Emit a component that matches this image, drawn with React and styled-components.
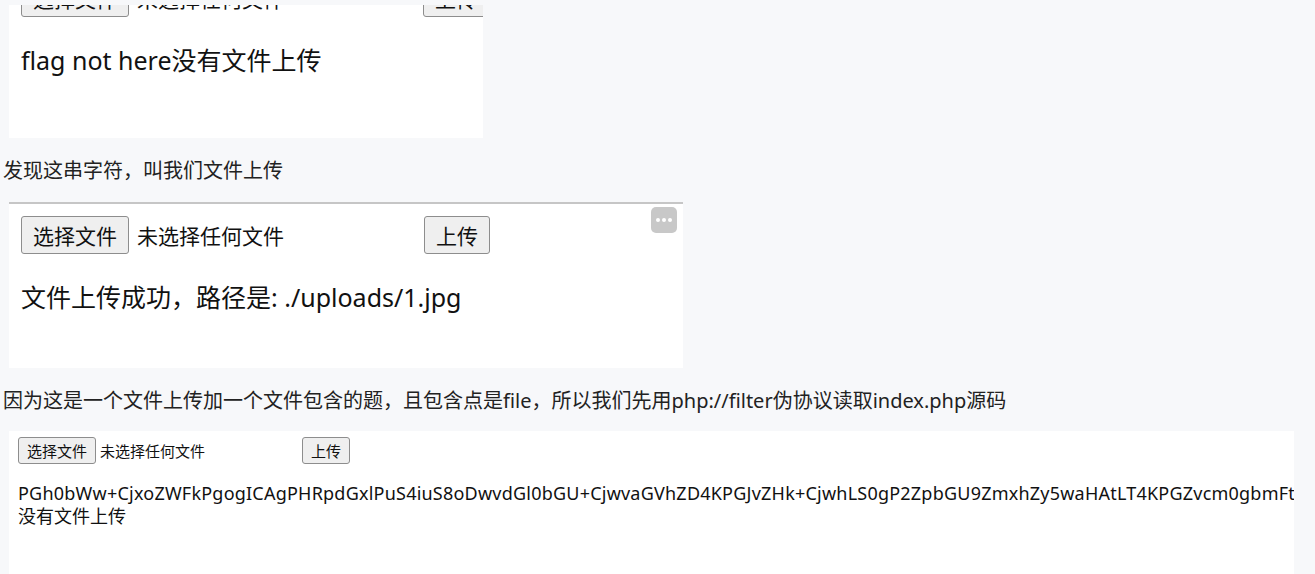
import styled, { createGlobalStyle } from 'styled-components';

const GlobalStyle = createGlobalStyle`
  html, body {
    margin: 0;
    padding: 0;
    background: #f7f8fa;
  }
  body {
    font-family: "Noto Sans", "Noto Sans CJK SC", sans-serif;
    overflow: hidden;
  }
`;

const Page = styled.div`
  display: flex;
  flex-direction: column;
  align-items: flex-start;
  padding-top: 5px;
  width: 1315px;
  height: 574px;
  box-sizing: border-box;
  overflow: hidden;
`;

const Shot = styled.div`
  position: relative;
  flex: none;
  margin-left: 9px;
  width: ${(p) => p.$w}px;
  height: ${(p) => p.$h}px;
  background: #fff;
  overflow: hidden;
  box-sizing: border-box;
  border-top: ${(p) => (p.$rule ? '2px solid #c6c6c6' : 'none')};
  padding: ${(p) => p.$pad};
  display: flex;
  flex-direction: column;
  color: #000;
`;

const Para = styled.p`
  flex: none;
  margin: 0;
  padding-left: 3px;
  font-size: 20px;
  line-height: 26px;
  color: #222;
  white-space: nowrap;
  font-family: "Noto Sans", "Noto Sans CJK SC", sans-serif;
  margin-top: ${(p) => p.$top}px;
  margin-bottom: ${(p) => p.$bottom}px;
`;

const FormRow = styled.div`
  display: flex;
  align-items: center;
  flex: none;
  margin-top: ${(p) => p.$top || 0}px;
  font-size: ${(p) => p.$fs}px;
`;

const FileBox = styled.div`
  display: flex;
  align-items: center;
  width: ${(p) => p.$w}px;
  flex: none;
`;

const Btn = styled.button`
  font-family: "Noto Sans CJK SC", sans-serif;
  font-size: ${(p) => p.$fs}px;
  height: ${(p) => p.$h}px;
  padding: 0 ${(p) => p.$px}px;
  background: #efefef;
  color: #111;
  border: 1px solid #8d8d8d;
  border-radius: 3px;
  line-height: 1;
  flex: none;
`;

const NoFile = styled.span`
  margin-left: ${(p) => p.$gap}px;
  font-family: "Noto Sans CJK SC", sans-serif;
  color: #111;
  white-space: nowrap;
`;

const Result = styled.div`
  flex: none;
  font-size: ${(p) => p.$fs}px;
  line-height: ${(p) => p.$lh}px;
  margin-top: ${(p) => p.$top}px;
  white-space: nowrap;
  color: #111;
`;

const Encoded = styled.span`
  letter-spacing: 0.22px;
`;

const MoreBtn = styled.div`
  position: absolute;
  top: 3px;
  right: 6px;
  width: 26px;
  height: 26px;
  border-radius: 5px;
  background: #c8c8c8;
  display: flex;
  align-items: center;
  justify-content: center;
  gap: 2px;
`;

const Dot = styled.span`
  width: 4px;
  height: 4px;
  border-radius: 50%;
  background: #fff;
`;

const BASE64 =
  'PGh0bWw+CjxoZWFkPgogICAgPHRpdGxlPuS4iuS8oDwvdGl0bGU+CjwvaGVhZD4KPGJvZHk+CjwhLS0gP2ZpbGU9ZmxhZy5waHAtLT4KPGZvcm0gbmFt';

function UploadForm({ fs, h, px, fileW, gap }) {
  return (
    <>
      <FileBox $w={fileW}>
        <Btn $fs={fs} $h={h} $px={px}>选择文件</Btn>
        <NoFile $gap={gap}>未选择任何文件</NoFile>
      </FileBox>
      <Btn $fs={fs} $h={h} $px={px}>上传</Btn>
    </>
  );
}

export default function App() {
  return (
    <Page>
      <GlobalStyle />
      <Shot $w={474} $h={133} $pad="0 0 0 12px">
        <FormRow $fs={21} $top={-26}>
          <UploadForm fs={21} h={38} px={11} fileW={402} gap={8} />
        </FormRow>
        <Result $fs={25} $lh={32} $top={27}>flag not here没有文件上传</Result>
      </Shot>

      <Para $top={20} $bottom={18}>发现这串字符，叫我们文件上传</Para>

      <Shot $w={674} $h={166} $pad="12px 0 0 12px" $rule>
        <FormRow $fs={21}>
          <UploadForm fs={21} h={38} px={11} fileW={403} gap={8} />
        </FormRow>
        <Result $fs={25} $lh={32} $top={27}>文件上传成功，路径是: ./uploads/1.jpg</Result>
        <MoreBtn>
          <Dot />
          <Dot />
          <Dot />
        </MoreBtn>
      </Shot>

      <Para $top={20} $bottom={17}>
        因为这是一个文件上传加一个文件包含的题，且包含点是file，所以我们先用php://filter伪协议读取index.php源码
      </Para>

      <Shot $w={1285} $h={160} $pad="6px 0 0 9px">
        <FormRow $fs={15}>
          <UploadForm fs={15} h={27} px={8} fileW={284} gap={4} />
        </FormRow>
        <Result $fs={18} $lh={23} $top={18}>
          <Encoded>{BASE64}</Encoded>
          <br />
          没有文件上传
        </Result>
      </Shot>
    </Page>
  );
}
